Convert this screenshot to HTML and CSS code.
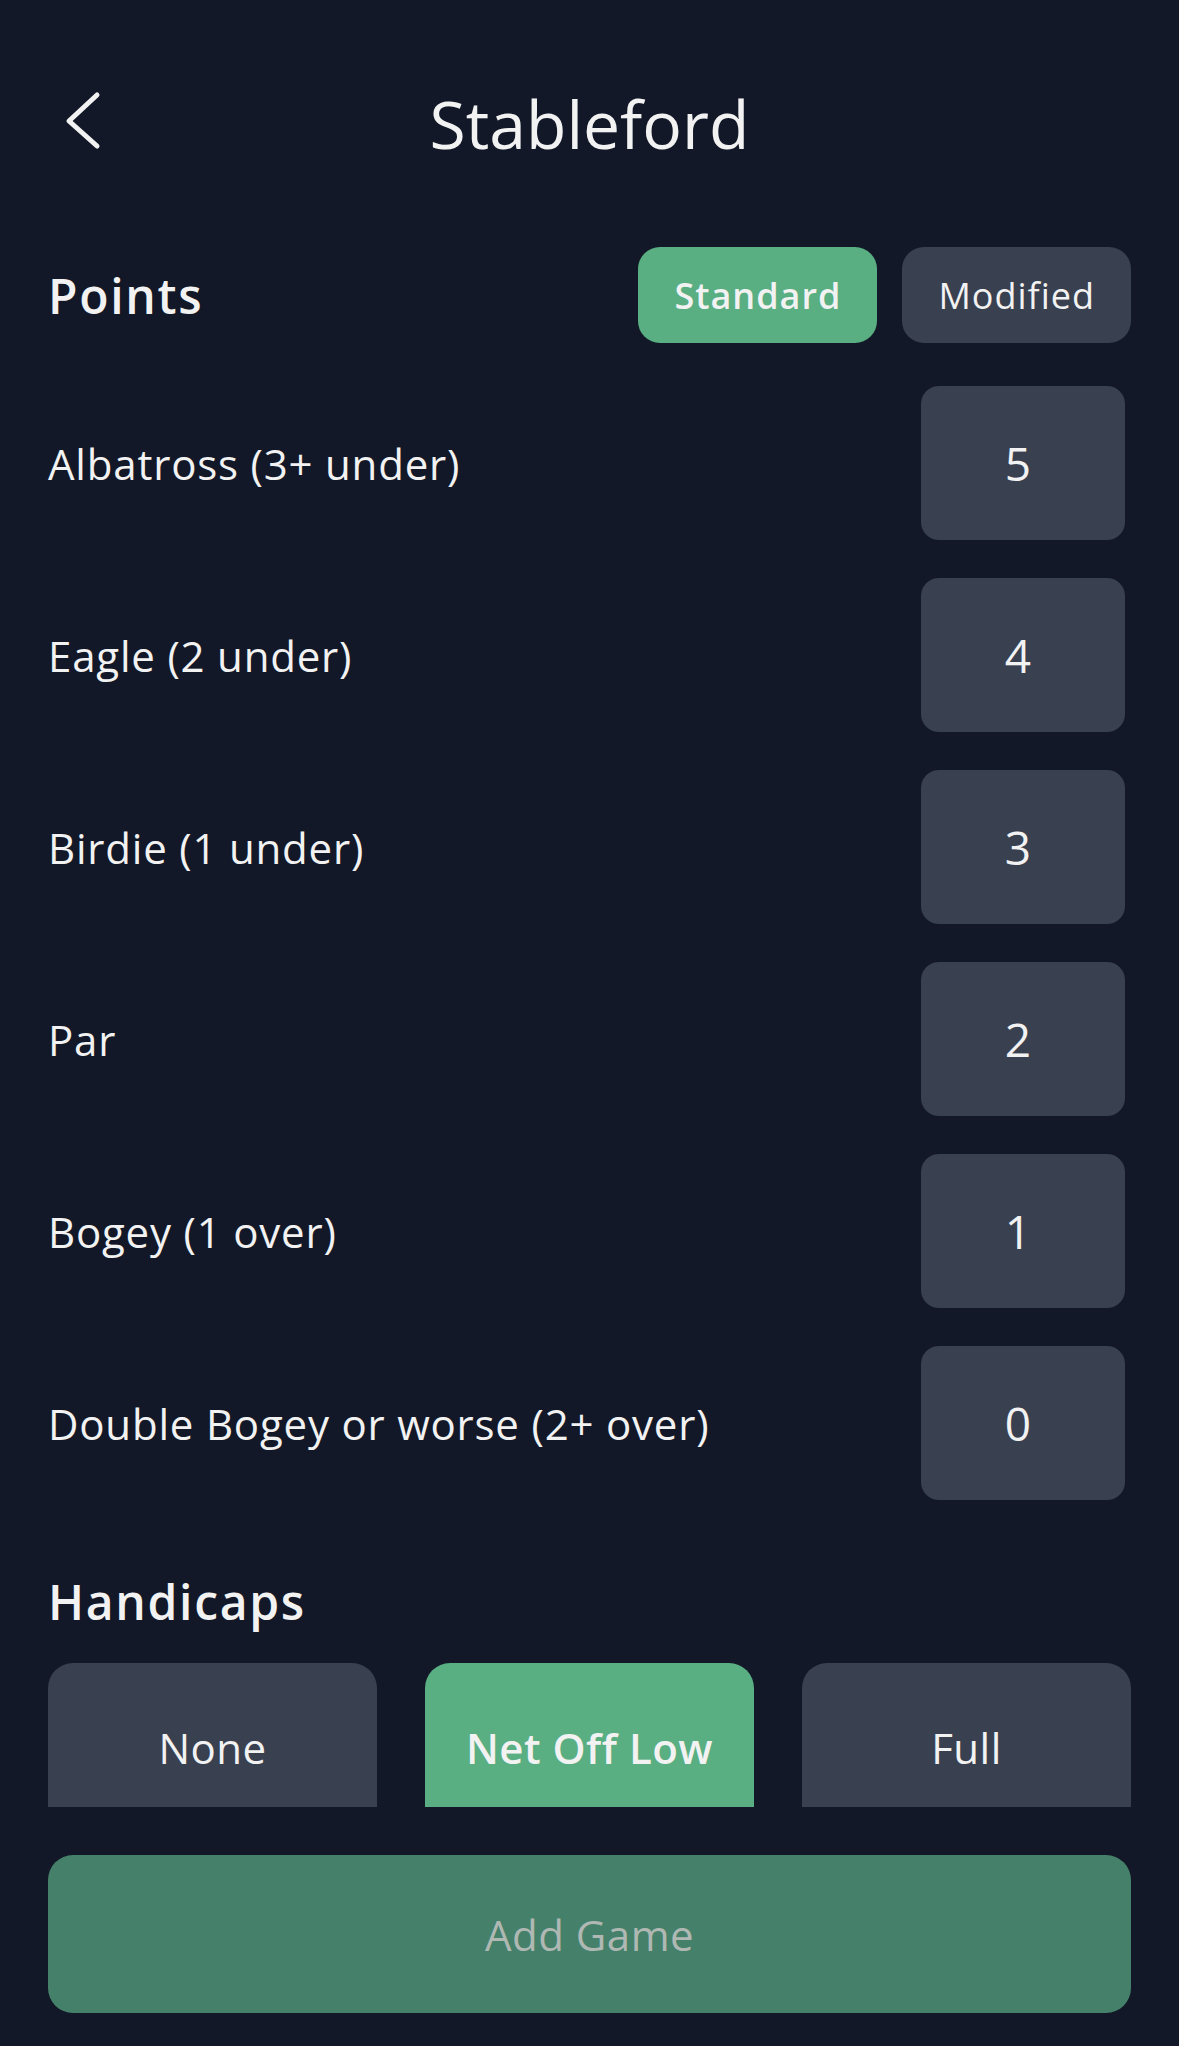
FILE: index.html
```html
<!DOCTYPE html>
<html lang="en">
<head>
<meta charset="utf-8">
<title>Stableford</title>
<link rel="stylesheet" href="styles.css">
</head>
<body>
<div class="screen">
  <header class="topbar">
    <div class="back">
      <svg class="back-icon" width="40" height="64" viewBox="0 0 40 64" aria-hidden="true">
        <polyline points="34,4 6,30 34,55" fill="none" stroke="#f2f2f2" stroke-width="5" stroke-linecap="round" stroke-linejoin="round"/>
      </svg>
    </div>
    <h1 class="title">Stableford</h1>
    <div class="spacer"></div>
  </header>

  <section class="points-head">
    <h2 class="section-title">Points</h2>
    <div class="toggle">
      <button class="pill pill-active">Standard</button>
      <button class="pill">Modified</button>
    </div>
  </section>

  <ul class="rows">
    <li class="row"><span class="label">Albatross (3+ under)</span><span class="value">5</span></li>
    <li class="row"><span class="label">Eagle (2 under)</span><span class="value">4</span></li>
    <li class="row"><span class="label">Birdie (1 under)</span><span class="value">3</span></li>
    <li class="row"><span class="label">Par</span><span class="value">2</span></li>
    <li class="row"><span class="label">Bogey (1 over)</span><span class="value">1</span></li>
    <li class="row"><span class="label">Double Bogey or worse (2+ over)</span><span class="value">0</span></li>
  </ul>

  <h2 class="section-title handicaps-title">Handicaps</h2>
  <div class="handicaps">
    <button class="hc">None</button>
    <button class="hc hc-active">Net Off Low</button>
    <button class="hc">Full</button>
  </div>

  <button class="add-game">Add Game</button>
</div>
</body>
</html>
```

FILE: styles.css
```css
* { box-sizing: border-box; }

html, body {
  margin: 0;
  padding: 0;
  background: #121827;
}

body {
  font-family: "Open Sans", "Noto Sans", sans-serif;
  color: #f2f2f2;
}

.screen {
  width: 1179px;
  height: 2046px;
  padding: 78px 48px 0 48px;
  overflow: hidden;
}

button {
  font-family: inherit;
  border: none;
  margin: 0;
  cursor: pointer;
}

.topbar {
  display: grid;
  grid-template-columns: 1fr auto 1fr;
  align-items: center;
}

.back {
  display: flex;
  align-items: center;
}

.back-icon {
  display: block;
  margin-left: 15px;
}

.title {
  margin: 0;
  font-size: 66px;
  font-weight: 400;
  line-height: normal;
  letter-spacing: 0;
  color: #f2f2f2;
}

.points-head {
  margin-top: 79px;
  height: 96px;
  display: flex;
  align-items: center;
  justify-content: space-between;
}

.section-title {
  margin: 0;
  font-size: 48px;
  font-weight: 600;
  letter-spacing: 1.7px;
  line-height: normal;
  color: #f2f2f2;
}

.toggle {
  display: flex;
  gap: 25px;
}

.pill {
  height: 96px;
  border-radius: 22px;
  background: #394050;
  color: #f2f2f2;
  font-size: 36px;
  font-weight: 400;
  letter-spacing: 1px;
  padding: 0 36px;
}

.pill-active {
  background: #59ae82;
  font-weight: 600;
  padding: 0 36px;
}

.rows {
  list-style: none;
  margin: 43px 0 0 0;
  padding: 0;
  display: flex;
  flex-direction: column;
  gap: 38px;
}

.row {
  height: 154px;
  display: flex;
  align-items: center;
  justify-content: space-between;
}

.label {
  font-size: 42px;
  letter-spacing: 0.8px;
  line-height: normal;
}

.value {
  width: 204px;
  height: 154px;
  margin-right: 6px;
  border-radius: 18px;
  background: #394050;
  display: flex;
  align-items: center;
  justify-content: center;
  padding-right: 10px;
  font-size: 46px;
  line-height: normal;
}

.handicaps-title {
  margin-top: 69px;
}

.handicaps {
  margin-top: 29px;
  height: 144px;
  overflow: hidden;
  display: grid;
  grid-template-columns: repeat(3, 1fr);
  gap: 48px;
  align-items: start;
}

.hc {
  height: 168px;
  border-radius: 25px;
  background: #394050;
  color: #f2f2f2;
  font-size: 42px;
  font-weight: 400;
  letter-spacing: 0.5px;
  padding: 0;
}

.hc-active {
  background: #59ae82;
  font-weight: 600;
}

.add-game {
  display: block;
  width: 100%;
  height: 158px;
  margin-top: 48px;
  border-radius: 25px;
  background: #45816a;
  color: #afb8b3;
  font-size: 42px;
  font-weight: 400;
  letter-spacing: 0.5px;
}
```
